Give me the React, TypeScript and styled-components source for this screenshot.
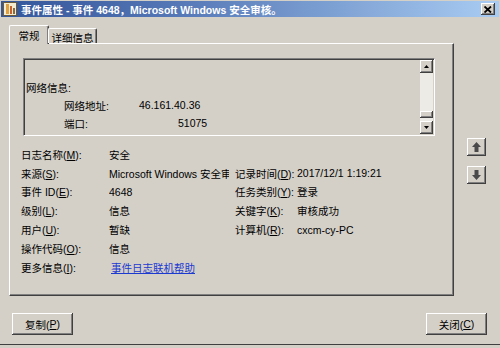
import styled, { createGlobalStyle } from "styled-components"

const GlobalStyle = createGlobalStyle`
  html, body {
    margin: 0;
    padding: 0;
    background: #d4d0c8;
  }
  body {
    font-family: "Liberation Sans", "Noto Sans CJK SC", sans-serif;
    font-size: 10.5px;
    color: #000;
  }
`

const raised = `
  box-shadow: inset -1px -1px #404040, inset 1px 1px #ffffff,
    inset -2px -2px #808080, inset 2px 2px #d4d0c8;
`

const Window = styled.div`
  width: 500px;
  height: 348px;
  box-sizing: border-box;
  padding: 1px 1px 0 1px;
  background: #d4d0c8;
  display: flex;
  flex-direction: column;
  box-shadow: inset 0 -3px #d4d0c8, inset 0 -4px #404040;
`

const TitleBar = styled.div`
  height: 16px;
  display: flex;
  align-items: center;
  gap: 4px;
  padding: 0 4px 0 2px;
  background: linear-gradient(90deg, #33559a 0%, #5577b6 35%, #a8ccf2 100%);
`

const TitleText = styled.span`
  color: #fff;
  font-weight: bold;
  font-size: 10.5px;
  white-space: nowrap;
`

const CloseButton = styled.div`
  margin-left: auto;
  width: 14px;
  height: 12px;
  background: #d4d0c8;
  display: flex;
  align-items: center;
  justify-content: center;
  ${raised}
`

const Body = styled.div`
  flex: 1;
  display: flex;
  flex-direction: column;
  padding: 8px 0 0 8px;
`

const MainRow = styled.div`
  display: flex;
  align-items: flex-start;
`

const TabControl = styled.div`
  width: 445px;
  display: flex;
  flex-direction: column;
`

const TabStrip = styled.div`
  height: 18px;
  display: flex;
  align-items: flex-end;
  position: relative;
  z-index: 1;
`

const Tab = styled.div<{ $active?: boolean }>`
  box-sizing: border-box;
  width: ${({ $active }) => ($active ? "40px" : "49px")};
  height: ${({ $active }) => ($active ? "19px" : "15px")};
  margin-bottom: ${({ $active }) => ($active ? "-1px" : "0")};
  margin-left: ${({ $active }) => ($active ? "0" : "-1px")};
  background: #d4d0c8;
  display: flex;
  align-items: center;
  justify-content: center;
  padding-top: ${({ $active }) => ($active ? "0" : "2px")};
  border-top: 1px solid #fff;
  border-left: 1px solid #fff;
  border-right: 1px solid #404040;
  box-shadow: inset -1px 0 #808080;
  border-radius: 2px 2px 0 0;
`

const Panel = styled.div`
  box-sizing: border-box;
  height: 253px;
  padding: 14px 18px 0 11px;
  border-top: 1px solid #fff;
  border-left: 1px solid #fff;
  border-right: 1px solid #404040;
  border-bottom: 1px solid #404040;
  box-shadow: inset -1px -1px #808080;
`

const DescBox = styled.div`
  margin-left: 2px;
  height: 78px;
  box-sizing: border-box;
  display: flex;
  border-top: 1px solid #808080;
  border-left: 1px solid #808080;
  border-right: 1px solid #fff;
  border-bottom: 1px solid #fff;
  box-shadow: inset 1px 1px #404040, inset -1px -1px #d4d0c8;
  padding: 1px;
`

const DescText = styled.div`
  flex: 1;
  padding: 18px 0 0 1px;
  overflow: hidden;
`

const DescLine = styled.div<{ $indent?: number }>`
  height: 18px;
  display: flex;
  align-items: center;
  padding-left: ${({ $indent }) => $indent ?? 0}px;
`

const DescLabel = styled.span`
  width: 75px;
`

const DescValue = styled.span<{ $shift?: number }>`
  padding-left: ${({ $shift }) => $shift ?? 0}px;
`

const ScrollBar = styled.div`
  width: 13px;
  display: flex;
  flex-direction: column;
`

const ScrollButton = styled.div`
  width: 13px;
  height: 13px;
  background: #d4d0c8;
  display: flex;
  align-items: center;
  justify-content: center;
  ${raised}
`

const ScrollTrack = styled.div`
  flex: 1;
  background: #ecebe6;
  display: flex;
  flex-direction: column;
`

const ScrollThumb = styled.div`
  margin-top: auto;
  margin-bottom: 3px;
  height: 7px;
  background: #d4d0c8;
  ${raised}
`

const InfoGrid = styled.div`
  margin-top: 9px;
  display: grid;
  grid-template-columns: 88px 126px 62px 1fr;
  grid-auto-rows: 18.8px;
  align-items: center;
`

const Value = styled.span`
  width: 120px;
  white-space: nowrap;
  overflow: hidden;
`

const Link = styled.a`
  color: #1c3ad0;
  text-decoration: underline;
  padding-left: 2px;
  cursor: pointer;
`

const Side = styled.div`
  margin-left: 13px;
  padding-top: 113px;
  display: flex;
  flex-direction: column;
  gap: 10px;
`

const SideButton = styled.div`
  width: 19px;
  height: 18px;
  background: #d4d0c8;
  display: flex;
  align-items: center;
  justify-content: center;
  ${raised}
`

const ButtonRow = styled.div`
  margin-top: 17px;
  display: flex;
  justify-content: space-between;
  padding: 0 12px 0 3px;
`

const Button = styled.div`
  width: 61px;
  height: 22px;
  background: #d4d0c8;
  display: flex;
  align-items: center;
  justify-content: center;
  ${raised}
`

function Key({ k }: { k: string }) {
  return (
    <>
      (<u>{k}</u>)
    </>
  )
}

function TitleIcon() {
  return (
    <svg width="14" height="14" viewBox="0 0 14 14">
      <rect x="0.5" y="0.5" width="13" height="13" fill="#f4ecd0" stroke="#6a5a3a" />
      <rect x="3" y="2" width="3" height="10" fill="#e0a040" />
      <rect x="7" y="4" width="2" height="8" fill="#c86030" />
      <rect x="10" y="6" width="2" height="6" fill="#8a6a40" />
    </svg>
  )
}

function BigArrow({ down }: { down?: boolean }) {
  return (
    <svg width="9" height="10" viewBox="0 0 9 10" style={down ? { transform: "rotate(180deg)" } : undefined}>
      <polygon points="4.5,0 9,5 6.5,5 6.5,10 2.5,10 2.5,5 0,5" fill="#4a4a4a" />
    </svg>
  )
}

function SmallArrow({ down }: { down?: boolean }) {
  return (
    <svg width="5" height="3" viewBox="0 0 5 3">
      <polygon points={down ? "0,0 5,0 2.5,3" : "2.5,0 5,3 0,3"} fill="#000" />
    </svg>
  )
}

export default function App() {
  return (
    <>
      <GlobalStyle />
      <Window>
        <TitleBar>
          <TitleIcon />
          <TitleText>事件属性 - 事件 4648，Microsoft Windows 安全审核。</TitleText>
          <CloseButton>
            <svg width="8" height="7" viewBox="0 0 8 7">
              <path d="M0.5 0.5 L7 6.5 M7 0.5 L0.5 6.5" stroke="#000" strokeWidth="1.8" />
            </svg>
          </CloseButton>
        </TitleBar>
        <Body>
          <MainRow>
            <TabControl>
              <TabStrip>
                <Tab $active>常规</Tab>
                <Tab>详细信息</Tab>
              </TabStrip>
              <Panel>
                <DescBox>
                  <DescText>
                    <DescLine>网络信息:</DescLine>
                    <DescLine $indent={38}>
                      <DescLabel>网络地址:</DescLabel>
                      <DescValue>46.161.40.36</DescValue>
                    </DescLine>
                    <DescLine $indent={38}>
                      <DescLabel>端口:</DescLabel>
                      <DescValue $shift={39}>51075</DescValue>
                    </DescLine>
                  </DescText>
                  <ScrollBar>
                    <ScrollButton>
                      <SmallArrow />
                    </ScrollButton>
                    <ScrollTrack>
                      <ScrollThumb />
                    </ScrollTrack>
                    <ScrollButton>
                      <SmallArrow down />
                    </ScrollButton>
                  </ScrollBar>
                </DescBox>
                <InfoGrid>
                  <span>日志名称<Key k="M" />:</span>
                  <Value>安全</Value>
                  <span />
                  <span />

                  <span>来源<Key k="S" />:</span>
                  <Value>Microsoft Windows 安全审核</Value>
                  <span>记录时间<Key k="D" />:</span>
                  <span>2017/12/1 1:19:21</span>

                  <span>事件 ID<Key k="E" />:</span>
                  <Value>4648</Value>
                  <span>任务类别<Key k="Y" />:</span>
                  <span>登录</span>

                  <span>级别<Key k="L" />:</span>
                  <Value>信息</Value>
                  <span>关键字<Key k="K" />:</span>
                  <span>审核成功</span>

                  <span>用户<Key k="U" />:</span>
                  <Value>暂缺</Value>
                  <span>计算机<Key k="R" />:</span>
                  <span>cxcm-cy-PC</span>

                  <span>操作代码<Key k="O" />:</span>
                  <Value>信息</Value>
                  <span />
                  <span />

                  <span>更多信息<Key k="I" />:</span>
                  <Value>
                    <Link>事件日志联机帮助</Link>
                  </Value>
                </InfoGrid>
              </Panel>
            </TabControl>
            <Side>
              <SideButton>
                <BigArrow />
              </SideButton>
              <SideButton>
                <BigArrow down />
              </SideButton>
            </Side>
          </MainRow>
          <ButtonRow>
            <Button>
              复制<Key k="P" />
            </Button>
            <Button>
              关闭<Key k="C" />
            </Button>
          </ButtonRow>
        </Body>
      </Window>
    </>
  )
}
